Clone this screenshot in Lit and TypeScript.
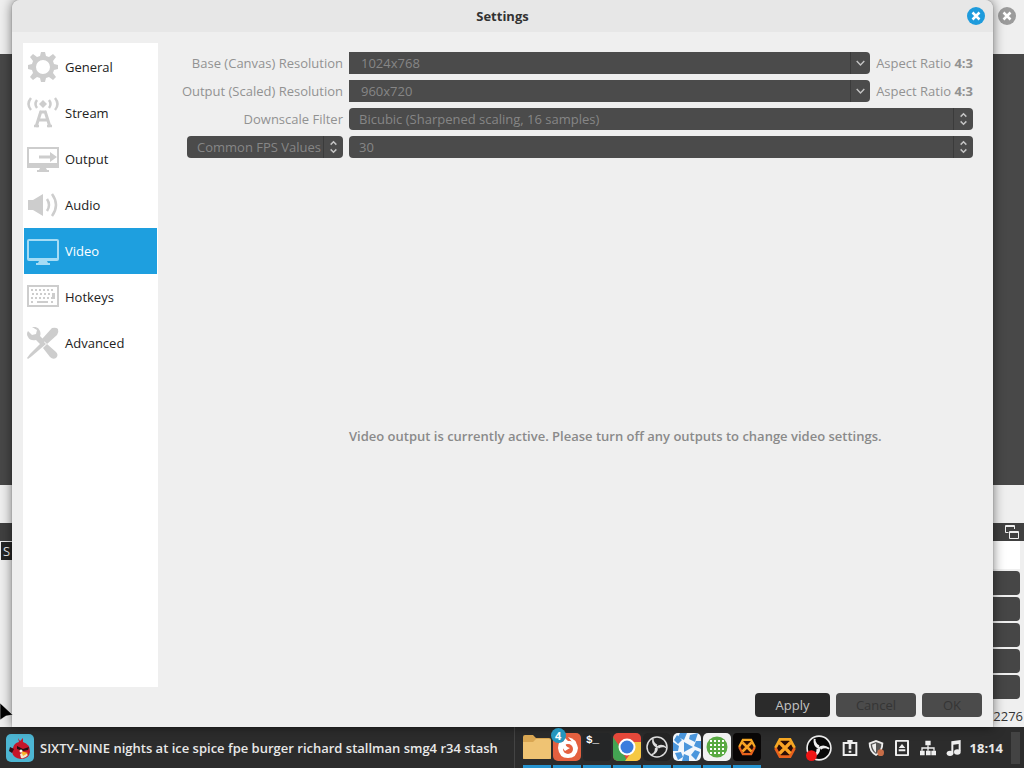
import { LitElement, html, svg, css, TemplateResult } from "lit";
import { customElement, state } from "lit/decorators.js";
import { classMap } from "lit/directives/class-map.js";

const gear = svg`<path fill-rule="evenodd" d="M14 1h4l1 4 3 1 4-3 3 3-3 4 1 3 4 1v4l-4 1-1 3 3 4-3 3-4-3-3 1-1 4h-4l-1-4-3-1-4 3-3-3 3-4-1-3-4-1v-4l4-1 1-3-3-4 3-3 4 3 3-1z M16 9a7 7 0 1 0 0 14a7 7 0 1 0 0-14z"/>`;
const stream = svg`<g fill="none" stroke="currentColor" stroke-width="2.500"><path d="M4 1q-5 6 0 12M10 3q-3 4 0 8M22 3q3 4 0 8M28 1q5 6 0 12"/><path d="M14 14L9 30M18 14l5 16M13 15h6M12 23h8" stroke-width="3"/><path d="M7 29h5M20 29h5"/></g><path d="M16 3l4 4-4 4-4-4z"/>`;
const output = svg`<path fill-rule="evenodd" d="M0 4h32v21H0zM2 6v14h28V6z"/><path d="M12 12.500h11V9l7 5-7 5v-3.500H12zM13 25h6l1 2h2v2H10v-2h2z"/>`;
const audio = svg`<path d="M1 11h5l10-6v22L6 21H1z"/><g fill="none" stroke="currentColor" stroke-width="2.500"><path d="M20 10q4 6 0 12M25 5q8 11 0 22"/></g>`;
const video = svg`<path fill-rule="evenodd" d="M2 4h28q2 0 2 2v18q0 2-2 2H2q-2 0-2-2V6q0-2 2-2zM2 6v17h28V6z"/><path d="M12 26h8l1 2h2v2H9v-2h2z"/>`;
const hotkeys = svg`<rect x="1" y="5" width="30" height="20" fill="none" stroke="currentColor" stroke-width="2"/><g fill="none" stroke="currentColor" stroke-width="2" stroke-dasharray="2 2"><path d="M4 9h24M5 13h22M4 17h24"/><path d="M4 21h4M24 21h4"/></g><path d="M10 20h11v2H10zM25 12h3v6h-3z"/>`;
const advanced = svg`<path d="M5 0q6-1 8 4 1 3 0 5l5 5-4 4-5-5q-6 1-8-3-2-3 0-6l4 4 4-1 1-4zM20 17l9 8q3 3 0 6-3 2-6-1l-7-9z"/><path d="M25 1q4-1 6 1 1 3-1 6L20 17l-5-5z"/><path d="M16 14l3 3L5 29l-4 3-1-1 3-4z"/>`;

const nav: [string, TemplateResult][] = [
  ["General", gear], ["Stream", stream], ["Output", output], ["Audio", audio],
  ["Video", video], ["Hotkeys", hotkeys], ["Advanced", advanced],
] as any;

const cross = html`<svg viewBox="0 0 18 18" width="18" height="18"><circle cx="9" cy="9" r="9" fill="currentColor"/><path d="M5.500 5.500l7 7M12.500 5.500l-7 7" stroke="#fff" stroke-width="2.500"/></svg>`;
const chevron = html`<svg class="mark" viewBox="0 0 20 22"><path d="M6 9l4 4 4-4"/></svg>`;
const updown = html`<svg class="mark" viewBox="0 0 20 22"><path d="M7 8.500l3-3 3 3M7 13.500l3 3 3-3"/></svg>`;

const swirl = (r: number) => svg`<g transform="rotate(${r} 12 12)"><path d="M12 12q-5-2-4-8.500M8 6q1 3 4 4.500"/></g>`;
const rotor = svg`${swirl(0)}${swirl(120)}${swirl(240)}`;
const hexMark = svg`<path d="M6.500 2.500h11L22.500 12l-5 9.500h-11L1.500 12z" fill="#2a0d06"/><g fill="none" stroke-width="3"><path d="M1.500 12l5-9.500h11l5 9.500" stroke="#f7a823"/><path d="M1.500 12l5 9.500h11l5-9.500" stroke="#e8611c"/></g><path d="M6 6l12 12M18 6L6 18" stroke="#f9a325" stroke-width="3.500"/>`;

const apps: [string, any][] = [
  ["Files", svg`<path d="M0 4q0-2 2-2h8l3 3h13q2 0 2 2v19H0z" fill="#d9a652"/><path d="M0 9h10l3-3h13q2 0 2 2v16q0 2-2 2H2q-2 0-2-2z" fill="#efc373"/>`],
  ["Firefox", svg`<rect width="28" height="28" rx="5" fill="#e4603f"/><path d="M7 8l3 1 2-4 3 3q9-1 10 7-1 10-10 10T5 15q0-4 2-7z" fill="#fff"/><path d="M15 4q9 2 9 10l-4-4z" fill="#fff"/><circle cx="15" cy="16" r="5" fill="#e4603f"/><path d="M12 9q0 5 5 6l-5 3-3-4z" fill="#fff"/>`],
  ["Terminal", svg`<rect width="28" height="28" rx="4" fill="#252627"/><text x="3" y="10" fill="#fff" font-size="11" font-weight="700" font-family="Liberation Mono, monospace">$_</text>`],
  ["Chrome", svg`<clipPath id="c"><rect width="28" height="28" rx="5"/></clipPath><g clip-path="url(#c)"><rect width="28" height="28" fill="#e5483a"/><path d="M0 4l9 13 5 11H0z" fill="#43a352"/><path d="M14 9h14v19H12l8-11z" fill="#f6c944"/></g><circle cx="14" cy="14" r="8.500" fill="#fff"/><circle cx="14" cy="14" r="6.500" fill="#3b7ddd"/>`],
  ["OBS Studio", svg`<rect width="28" height="28" rx="5" fill="#232323"/><circle cx="14" cy="14" r="10" fill="none" stroke="#ddd" stroke-width="1.500"/><g transform="translate(2 2)" fill="none" stroke="#ddd" stroke-width="1.500">${rotor}</g>`],
  ["Video player", svg`<rect width="28" height="28" rx="5" fill="#f2f7fc"/><g fill="#4a96dc"><path d="M7 0h7l-3 7-6-3zM17 2l8-2-3 9-6-3zM28 8v8l-7-3 2-5zM27 19l-4 8-5-5 4-5zM16 28H9l2-7 5 2zM5 27l-3-7 6-1 2 5zM0 18V9l6 4-1 5zM1 7l3-5 5 5-4 4z"/><path d="M11 9l9 5-9 5z"/></g>`],
  ["Keypad", svg`<rect width="28" height="28" rx="5" fill="#f1f1f1"/><circle cx="14" cy="14" r="10.500" fill="#58a942"/><g fill="none" stroke="#fff" stroke-width="2" stroke-dasharray="2 2"><path d="M7 8h14M7 12h14M7 16h14M7 20h14"/></g>`],
  ["Hex", svg`<rect width="28" height="28" rx="4" fill="#080606"/><g transform="translate(5 5) scale(.75)">${hexMark}</g>`],
];

const obsTray = svg`<circle cx="12" cy="12" r="11" fill="#080808" stroke="#eee" stroke-width="1.500"/><g fill="none" stroke="#eee" stroke-width="1.800">${rotor}</g><circle cx="5" cy="19" r="5" fill="#f01515"/>`;
const tray: [string, number, any][] = [
  ["Hex", 22, hexMark],
  ["OBS", 26, obsTray],
  ["Clipboard", 16, svg`<path d="M1 3h22v21H1zM8 0h8v5H8z" fill="#eee"/><path d="M4 6h16v15H4z" fill="#2c2c2c"/><path d="M10 6h4v8h-4zM10 16h4v3h-4z" fill="#eee"/>`],
  ["Shield", 16, svg`<path d="M12 0l11 4q0 14-11 20Q1 18 1 4z" fill="#eee"/><path d="M12 3l8 3q0 10-8 15-8-5-8-15z" fill="#555"/><path d="M12 5v14Q7 15 6 7z" fill="#eee"/><circle cx="19" cy="19" r="5" fill="#c76d47"/>`],
  ["Removable drives", 16, svg`<rect x="3" y="1" width="18" height="22" rx="1" fill="none" stroke="#eee" stroke-width="3"/><path d="M12 6l5 6H7zM7 14h10v3H7z" fill="#eee"/>`],
  ["Network", 16, svg`<path d="M8 1h8v7H8zM0 16h7v7H0zM9 16h7v7H9zM17 16h7v7h-7z" fill="#eee"/><path d="M12 8v8M3 16v-4h18v4" fill="none" stroke="#eee" stroke-width="2"/>`],
  ["Music", 16, svg`<path d="M8 2l14-2v17h-3V6l-8 1v13H8z" fill="#eee"/><ellipse cx="6" cy="20" rx="5" ry="4" fill="#eee"/><ellipse cx="17" cy="18" rx="5" ry="4" fill="#eee"/>`],
];

@customElement("app-root")
export class AppRoot extends LitElement {
  @state() private page = "Video";

  static styles = css`
    :host { display: flex; flex-direction: column; height: 100vh; overflow: hidden; font: 13px/18px "Open Sans", "Noto Sans", sans-serif; color: #333; background: #efefef; }
    * { box-sizing: border-box; }
    svg { display: block; flex: none; }
    button, select { font: inherit; border: 0; margin: 0; }
    .desktop { flex: 1; min-height: 0; position: relative; display: flex; flex-direction: column; }
    .caption { height: 54px; display: flex; justify-content: flex-end; padding: 7px 8px; background: #efefef; }
    .round { padding: 0; background: none; color: #1e9bdc; height: 18px; }
    .caption .round { color: #9b9b9b; }
    .preview { flex: 1; background: #484848; }
    .toolbar { height: 38px; background: #efefef; }
    .dockbar { height: 18px; background: #404040; display: flex; justify-content: flex-end; align-items: center; padding-right: 4px; }
    .dock { height: 186px; display: flex; justify-content: space-between; background: #efefef; }
    .scene { align-self: flex-start; margin: 1px; padding-left: 2px; width: 20px; background: #252525; color: #eee; }
    .controls { width: 80px; display: flex; flex-direction: column; gap: 2px; padding-right: 4px; }
    .blank { height: 28px; background: #fff; }
    .controls button { height: 24px; border-radius: 4px; background: #464646; }
    .count { text-align: right; margin: 6px -3px 0 0; }
    .dialog { position: absolute; inset: 0 31px 0 12px; display: flex; flex-direction: column; background: #efefef; border-radius: 8px 8px 0 0; box-shadow: 0 0 12px #0008, 0 0 1px #0008; }
    .title { height: 32px; display: grid; grid-template-columns: 1fr auto 1fr; align-items: center; padding: 0 8px; background: #e7e7e7; border-radius: 8px 8px 0 0; }
    h1 { font: inherit; font-weight: 700; grid-column: 2; margin: 0; }
    .title .round { justify-self: end; }
    .body { flex: 1; min-height: 0; display: flex; padding: 11px 20px 6px 11px; gap: 22px; }
    .list { width: 135px; background: #fff; padding: 1px; flex: none; }
    .item { display: flex; align-items: center; gap: 6px; width: 100%; height: 46px; padding: 0 3px; background: none; color: #222; text-align: left; }
    .item svg { color: #cdcdcd; fill: currentColor; }
    .item.on { background: #1e9fdf; color: #fff; }
    .item.on svg { color: #a5dcf5; }
    .panel { flex: 1; min-width: 0; display: flex; flex-direction: column; padding-top: 9px; }
    .form { display: grid; grid-template-columns: 163px 1fr auto; gap: 6px; color: #929292; align-items: center; }
    .form label { text-align: right; white-space: nowrap; }
    .wide { grid-column: 2 / 4; }
    .combo { display: grid; grid-template-columns: 1fr 20px; height: 22px; color: #8e8e8e; }
    .combo select { appearance: none; grid-area: 1 / 1 / 2 / 3; min-width: 0; width: 100%; height: 22px; padding: 0 22px 0 10px; color: #868686; background: #4b4b4b; border-radius: 4px; opacity: 1; }
    .combo.edit select { padding-left: 12px; border-radius: 0 4px 4px 0; }
    .mark { grid-area: 1 / 2; z-index: 1; width: 20px; height: 22px; fill: none; stroke: #c4c4c4; stroke-width: 1.5; border-left: 1px solid #3b3b3b; pointer-events: none; }
    .fps { margin-left: 7px; }
    .notice { flex: 1; display: flex; align-items: center; padding: 26px 0 0 169px; font-weight: 600; color: #8a8a8a; }
    .actions { display: flex; justify-content: flex-end; gap: 6px; padding: 0 11px 10px; }
    .actions button { height: 24px; border-radius: 4px; background: #4b4b4b; color: #353535; width: 80px; }
    .actions .apply { background: #2b2b2b; color: #c4c4c4; width: 75px; }
    .actions .ok { width: 60px; }
    .pointer { position: absolute; left: 0; bottom: 6px; }
    .taskbar { height: 41px; flex: none; display: flex; align-items: center; background: #2c2c2c; color: #e8e8e8; padding-right: 4px; }
    .window { display: flex; align-items: center; gap: 6px; flex: 1; min-width: 0; overflow: hidden; padding: 0 0 0 6px; background: none; color: inherit; font-weight: 600; text-align: left; white-space: nowrap; height: 41px; }
    .apps { display: flex; gap: 2px; border-left: 1px solid #444; padding: 0 8px 0 8px; height: 41px; }
    .app { position: relative; width: 28px; padding: 2px 0 0; background: none; border-bottom: 3px solid #2794d0; }
    .badge { position: absolute; top: 1px; left: -2px; width: 15px; height: 15px; border-radius: 8px; background: #2596be; color: #fff; font-weight: 700; font-size: 11px; line-height: 15px; text-align: center; }
    .tray { display: flex; align-items: center; gap: 10px; padding-left: 5px; }
    .clock { font-weight: 700; margin: 0 8px; }
    .corner { width: 9px; height: 32px; background: #434343; }
  `;

  private combo(id: string, value: string, name: string, kind = "") {
    return html`<div class="combo ${kind}">
      <select id=${id} aria-label=${name} disabled><option>${value}</option></select>
      ${kind === "edit" ? chevron : updown}
    </div>`;
  }

  render() {
    return html`
      <main class="desktop">
        <div class="caption"><button class="round" aria-label="Close main window">${cross}</button></div>
        <div class="preview"></div>
        <div class="toolbar"></div>
        <div class="dockbar"><svg width="16" height="14" viewBox="0 0 16 14" fill="none" stroke="#eee"><path d="M4.500 7.500h-3v-7h9V4M1 1.500h10M5.500 6.500h9v7h-9zM5 7.500h10"/></svg></div>
        <div class="dock">
          <div class="scene">S</div>
          <div class="controls">
            <div class="blank"></div>
            ${["Streaming", "Recording", "Studio mode", "Settings", "Exit"].map((n) => html`<button aria-label=${n}></button>`)}
            <div class="count">2276</div>
          </div>
        </div>

        <section class="dialog" role="dialog" aria-label="Settings">
          <header class="title"><h1>Settings</h1><button class="round" aria-label="Close">${cross}</button></header>
          <div class="body">
            <nav class="list">
              ${nav.map(([name, icon]) => html`<button class=${classMap({ item: true, on: name === this.page })} @click=${() => (this.page = name)}>
                <svg viewBox="0 0 32 32" width="32" height="32">${icon}</svg>${name}</button>`)}
            </nav>
            <div class="panel">
              <div class="form">
                <label for="base">Base (Canvas) Resolution</label>
                ${this.combo("base", "1024x768", "Base (Canvas) Resolution", "edit")}
                <span>Aspect Ratio <b>4:3</b></span>
                <label for="scaled">Output (Scaled) Resolution</label>
                ${this.combo("scaled", "960x720", "Output (Scaled) Resolution", "edit")}
                <span>Aspect Ratio <b>4:3</b></span>
                <label for="filter">Downscale Filter</label>
                ${this.combo("filter", "Bicubic (Sharpened scaling, 16 samples)", "Downscale Filter", "wide")}
                ${this.combo("kind", "Common FPS Values", "FPS type", "fps")}
                ${this.combo("fps", "30", "Common FPS Values", "wide")}
              </div>
              <div class="notice">Video output is currently active. Please turn off any outputs to change video settings.</div>
            </div>
          </div>
          <footer class="actions">
            <button class="apply">Apply</button>
            <button disabled>Cancel</button>
            <button class="ok" disabled>OK</button>
          </footer>
        </section>
        <svg class="pointer" width="13" height="18" viewBox="0 0 13 18"><path d="M0 0l13 12-7 1-6 4z" fill="#000" stroke="#fff" stroke-width=".5"/></svg>
      </main>
      <footer class="taskbar">
        <button class="window">
          <svg width="28" height="28" viewBox="0 0 28 28"><rect width="28" height="28" rx="5" fill="#4db6d3"/><path d="M12 4l2 3 3-3v4q7 2 7 10-1 7-9 7-8-1-9-7l-2-3 3-1q1-5 6-6z" fill="#c5162b"/><path d="M4 13l4 2-2 4-3-2z" fill="#301018"/><path d="M14 20q5-3 8 1-3 4-7 3z" fill="#f4e8cf"/><path d="M15 17l7 2-5 3z" fill="#f8b52b"/><path d="M11 12l6 3 6-2-1 3-5 1-6-2z" fill="#231014"/><circle cx="15" cy="17" r="1.500" fill="#fff"/></svg>
          SIXTY-NINE nights at ice spice fpe burger richard stallman smg4 r34 stash
        </button>
        <div class="apps">
          ${apps.map(([name, icon]) => html`<button class="app" aria-label=${name}>
            <svg width="28" height="28" viewBox="0 0 28 28">${icon}</svg>
            ${name === "Firefox" ? html`<span class="badge">4</span>` : ""}
          </button>`)}
        </div>
        <div class="tray">
          ${tray.map(([name, size, icon]) => html`<svg role="img" aria-label=${name} width=${size} height=${size} viewBox="0 0 24 24">${icon}</svg>`)}
        </div>
        <time class="clock">18:14</time>
        <div class="corner"></div>
      </footer>
    `;
  }
}
